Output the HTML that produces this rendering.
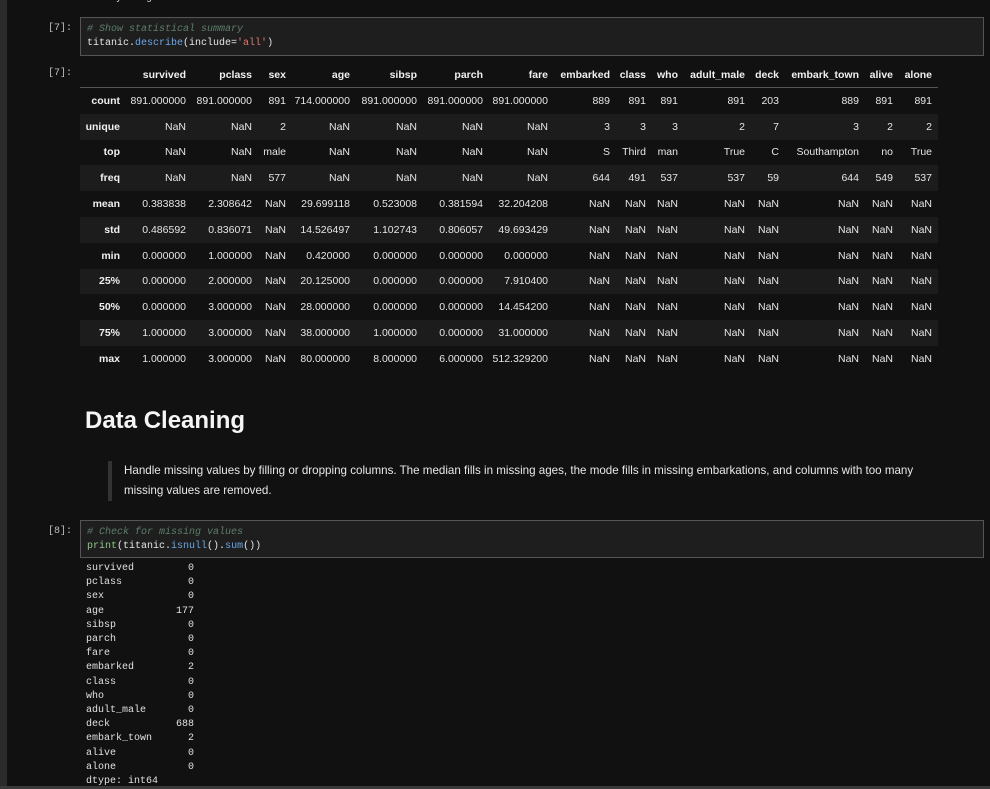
<!DOCTYPE html>
<html><head><meta charset="utf-8"><style>
body{margin:0;width:990px;height:789px;background:#111111;overflow:hidden;position:relative;font-family:"Liberation Sans",sans-serif;color:#e6e6e6}
.lb{position:absolute;left:0;top:0;width:7px;height:789px;background:#2b2b2b}
.bb{position:absolute;left:0;top:786px;width:990px;height:3px;background:#3a3a3a}
.mono{font-family:"Liberation Mono",monospace;font-size:10px}
.prompt{position:absolute;width:72px;text-align:right;left:0;color:#bdbdbd}
.code{position:absolute;left:80px;width:904px;background:#1e1e1e;border:1px solid #555;box-sizing:border-box;padding:5px 6px;line-height:14px}
.c{color:#5d7f6a;font-style:italic}.f{color:#6aa7e8}.s{color:#e07a6a}.g{color:#8fc48a}
table{position:absolute;left:80px;top:62px;border-collapse:collapse;font-size:10.5px;table-layout:fixed;width:858px}
td,th{text-align:right;padding:0 6px 0 0;height:25.8px;white-space:nowrap;overflow:visible}
th{font-weight:bold;color:#f0f0f0}
thead th{height:25px;border-bottom:1px solid #555}
tbody tr:nth-child(even){background:#1c1c1c}
.out{position:absolute;left:86px;top:562px;line-height:14.2px;white-space:pre;color:#e0e0e0}
</style></head><body>
<div class="lb"></div><div class="bb"></div>
<div class="mono" style="position:absolute;left:86px;top:-7px;color:#ddd">memory usage: 80.7+ KB</div>
<div class="prompt mono" style="top:23px">[7]:</div>
<div class="code mono" style="top:17px;height:39px"><span class="c"># Show statistical summary</span><br>titanic.<span class="f">describe</span>(include=<span class="s">'all'</span>)</div>
<div class="prompt mono" style="top:68px">[7]:</div>
<table>
<colgroup><col style="width:46px"><col style="width:66px"><col style="width:66px"><col style="width:34px"><col style="width:64px"><col style="width:67px"><col style="width:66px"><col style="width:65px"><col style="width:62px"><col style="width:36px"><col style="width:32px"><col style="width:67px"><col style="width:34px"><col style="width:80px"><col style="width:34px"><col style="width:39px"></colgroup>
<thead><tr><th></th><th>survived</th><th>pclass</th><th>sex</th><th>age</th><th>sibsp</th><th>parch</th><th>fare</th><th>embarked</th><th>class</th><th>who</th><th>adult_male</th><th>deck</th><th>embark_town</th><th>alive</th><th>alone</th></tr></thead>
<tbody>
<tr><th>count</th><td>891.000000</td><td>891.000000</td><td>891</td><td>714.000000</td><td>891.000000</td><td>891.000000</td><td>891.000000</td><td>889</td><td>891</td><td>891</td><td>891</td><td>203</td><td>889</td><td>891</td><td>891</td></tr>
<tr><th>unique</th><td>NaN</td><td>NaN</td><td>2</td><td>NaN</td><td>NaN</td><td>NaN</td><td>NaN</td><td>3</td><td>3</td><td>3</td><td>2</td><td>7</td><td>3</td><td>2</td><td>2</td></tr>
<tr><th>top</th><td>NaN</td><td>NaN</td><td>male</td><td>NaN</td><td>NaN</td><td>NaN</td><td>NaN</td><td>S</td><td>Third</td><td>man</td><td>True</td><td>C</td><td>Southampton</td><td>no</td><td>True</td></tr>
<tr><th>freq</th><td>NaN</td><td>NaN</td><td>577</td><td>NaN</td><td>NaN</td><td>NaN</td><td>NaN</td><td>644</td><td>491</td><td>537</td><td>537</td><td>59</td><td>644</td><td>549</td><td>537</td></tr>
<tr><th>mean</th><td>0.383838</td><td>2.308642</td><td>NaN</td><td>29.699118</td><td>0.523008</td><td>0.381594</td><td>32.204208</td><td>NaN</td><td>NaN</td><td>NaN</td><td>NaN</td><td>NaN</td><td>NaN</td><td>NaN</td><td>NaN</td></tr>
<tr><th>std</th><td>0.486592</td><td>0.836071</td><td>NaN</td><td>14.526497</td><td>1.102743</td><td>0.806057</td><td>49.693429</td><td>NaN</td><td>NaN</td><td>NaN</td><td>NaN</td><td>NaN</td><td>NaN</td><td>NaN</td><td>NaN</td></tr>
<tr><th>min</th><td>0.000000</td><td>1.000000</td><td>NaN</td><td>0.420000</td><td>0.000000</td><td>0.000000</td><td>0.000000</td><td>NaN</td><td>NaN</td><td>NaN</td><td>NaN</td><td>NaN</td><td>NaN</td><td>NaN</td><td>NaN</td></tr>
<tr><th>25%</th><td>0.000000</td><td>2.000000</td><td>NaN</td><td>20.125000</td><td>0.000000</td><td>0.000000</td><td>7.910400</td><td>NaN</td><td>NaN</td><td>NaN</td><td>NaN</td><td>NaN</td><td>NaN</td><td>NaN</td><td>NaN</td></tr>
<tr><th>50%</th><td>0.000000</td><td>3.000000</td><td>NaN</td><td>28.000000</td><td>0.000000</td><td>0.000000</td><td>14.454200</td><td>NaN</td><td>NaN</td><td>NaN</td><td>NaN</td><td>NaN</td><td>NaN</td><td>NaN</td><td>NaN</td></tr>
<tr><th>75%</th><td>1.000000</td><td>3.000000</td><td>NaN</td><td>38.000000</td><td>1.000000</td><td>0.000000</td><td>31.000000</td><td>NaN</td><td>NaN</td><td>NaN</td><td>NaN</td><td>NaN</td><td>NaN</td><td>NaN</td><td>NaN</td></tr>
<tr><th>max</th><td>1.000000</td><td>3.000000</td><td>NaN</td><td>80.000000</td><td>8.000000</td><td>6.000000</td><td>512.329200</td><td>NaN</td><td>NaN</td><td>NaN</td><td>NaN</td><td>NaN</td><td>NaN</td><td>NaN</td><td>NaN</td></tr>
</tbody></table>
<div style="position:absolute;left:85px;top:407px;font-size:24px;font-weight:bold;color:#f5f5f5">Data Cleaning</div>
<div style="position:absolute;left:108px;top:461px;width:4px;height:40px;background:#333"></div>
<div style="position:absolute;left:124px;top:461px;width:800px;font-size:11.6px;line-height:20px;color:#e8e8e8">Handle missing values by filling or dropping columns. The median fills in missing ages, the mode fills in missing embarkations, and columns with too many missing values are removed.</div>
<div class="prompt mono" style="top:526px">[8]:</div>
<div class="code mono" style="top:520px;height:38px"><span class="c"># Check for missing values</span><br><span class="g">print</span>(titanic.<span class="f">isnull</span>().<span class="f">sum</span>())</div>
<div class="out mono">survived         0
pclass           0
sex              0
age            177
sibsp            0
parch            0
fare             0
embarked         2
class            0
who              0
adult_male       0
deck           688
embark_town      2
alive            0
alone            0
dtype: int64</div>
</body></html>
